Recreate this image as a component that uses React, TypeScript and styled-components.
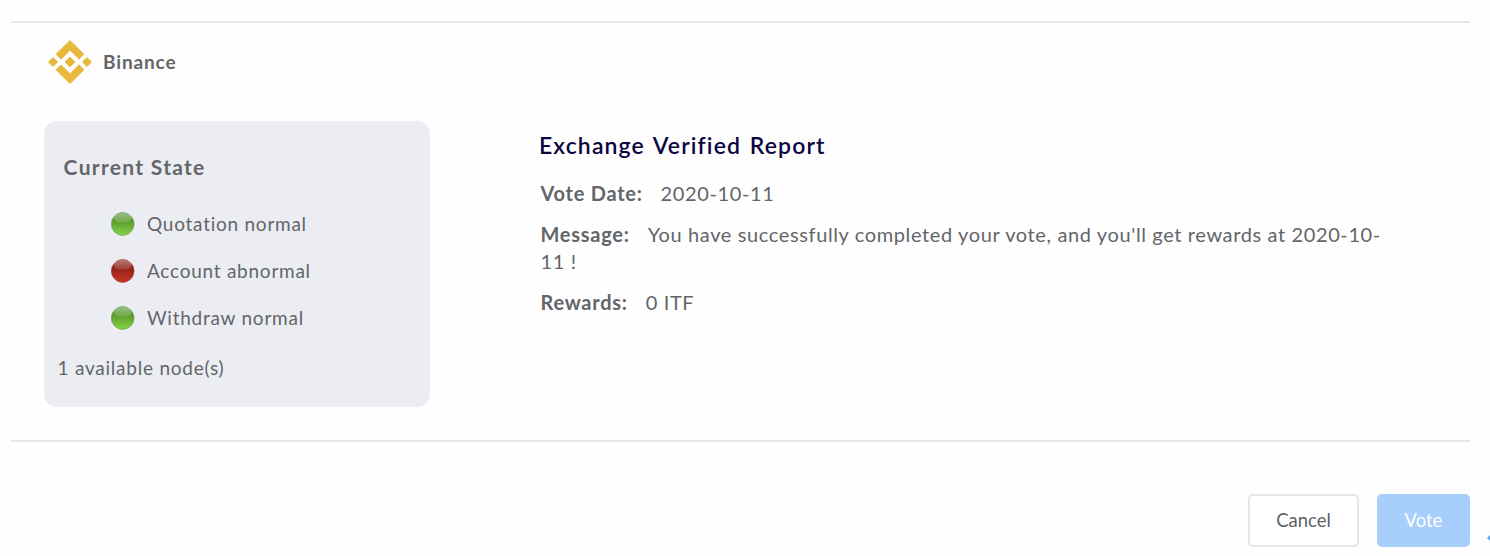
import React from "react";
import styled, { createGlobalStyle } from "styled-components";

const GlobalStyle = createGlobalStyle`
  *, *::before, *::after { box-sizing: border-box; }
  body { margin: 0; background: #fefefe; font-family: Lato, "Open Sans", sans-serif; color: #636569; }
  h2, h3, p, ul { margin: 0; padding: 0; font-weight: inherit; }
`;

const Page = styled.main`
  position: relative;
  height: 556px;
  padding: 21px 20px 0 11px;
  overflow: hidden;
`;

const Section = styled.section`
  height: 421px;
  padding: 16px 33px 0;
  border-top: 2px solid #e6e7ee;
  border-bottom: 2px solid #e6e7ee;
`;

const Brand = styled.header`
  display: flex;
  align-items: center;
  gap: 11px;
  height: 46px;
  padding-left: 4px;
`;

const BrandName = styled.span`
  font-size: 19px;
  line-height: 26px;
  font-weight: 700;
  letter-spacing: 0.86px;
`;

const Columns = styled.div`
  display: flex;
  align-items: flex-start;
  gap: 109px;
  margin-top: 36px;
`;

const StateCard = styled.div`
  width: 386px;
  height: 286px;
  padding: 31px 14px 0;
  border-radius: 13px;
  background: #ebedf3;
`;

const StateTitle = styled.h3`
  padding-left: 5.6px;
  font-size: 21px;
  line-height: 30px;
  font-weight: 700;
  letter-spacing: 1.3px;
`;

const StateList = styled.ul`
  margin-top: 18px;
  padding-left: 53px;
  list-style: none;
`;

const StateItem = styled.li`
  display: flex;
  align-items: center;
  gap: 12px;
  height: 47.2px;
  font-size: 19px;
  line-height: 24px;
  letter-spacing: 0.75px;
`;

const Nodes = styled.p`
  margin-top: 13px;
  margin-left: -0.5px;
  font-size: 19px;
  line-height: 26px;
  letter-spacing: 0.77px;
`;

const Report = styled.div`
  width: 850px;
  padding-top: 8px;
`;

const ReportTitle = styled.h2`
  font-size: 23px;
  line-height: 32px;
  font-weight: 600;
  letter-spacing: 1.12px;
  word-spacing: 1.8px;
  color: #0b0541;
`;

const Field = styled.p`
  margin: 0 0 13.4px 1.5px;
  font-size: 20px;
  line-height: 27.5px;
  letter-spacing: 0.62px;

  ${ReportTitle} + & { margin-top: 19px; }
`;

const Label = styled.strong`
  margin-right: 18px;
  font-weight: 700;
  letter-spacing: 0.74px;
`;

const Actions = styled.footer`
  display: flex;
  justify-content: flex-end;
  gap: 18px;
  margin-top: 52px;
`;

const Button = styled.button<{ $primary?: boolean }>`
  width: ${(p) => (p.$primary ? 93 : 111)}px;
  height: 53px;
  padding: 0 0 1px;
  border: 2px solid ${(p) => (p.$primary ? "#a8cefb" : "#e4e5ed")};
  border-radius: 5px;
  background: ${(p) => (p.$primary ? "#a8cefb" : "#fff")};
  color: ${(p) => (p.$primary ? "#fff" : "#606266")};
  font: 400 18.5px/26px Lato, sans-serif;
`;

const EdgeMark = styled.svg`
  position: absolute;
  right: 0;
  top: 535px;
`;

const BrandMark = () => (
  <svg width="44" height="44" viewBox="0 0 44 44" fill="#e8b83c" stroke="#e8b83c" strokeWidth=".8">
    <path d="M22 .5 36 14.2 31 19.2 22 10.2 13 19.2 8 14.2Z" />
    <path d="M22 43.5 36 29.8 31 24.8 22 33.8 13 24.8 8 29.8Z" />
    <path d="M.5 22 5 17.4 9.6 22 5 26.6Z" />
    <path d="M34.4 22 39 17.4 43.5 22 39 26.6Z" />
    <path d="M17 22 22 17 27 22 22 27Z" />
  </svg>
);

const Orb = ({ ok }: { ok: boolean }) => {
  const id = ok ? "ok" : "bad";
  return (
    <svg width="24" height="24" viewBox="0 0 24 24">
      <defs>
        <linearGradient id={id} x2="0" y2="1">
          <stop offset="0" stopColor={ok ? "#4f9132" : "#891d14"} />
          <stop offset=".42" stopColor={ok ? "#5f9f30" : "#962318"} />
          <stop offset="1" stopColor={ok ? "#83d545" : "#ca3524"} />
        </linearGradient>
        <linearGradient id={`${id}-shine`} x2="0" y2="1">
          <stop offset="0" stopColor="#fff" stopOpacity=".4" />
          <stop offset="1" stopColor="#fff" stopOpacity=".1" />
        </linearGradient>
      </defs>
      <circle cx="11.7" cy="12" r="11.4" fill={`url(#${id})`} stroke={ok ? "#65a044" : "#a04238"} strokeWidth=".6" />
      <ellipse cx="11.7" cy="6" rx="8.8" ry="4.9" fill={`url(#${id}-shine)`} />
    </svg>
  );
};

const states = [
  { text: "Quotation normal", ok: true },
  { text: "Account abnormal", ok: false },
  { text: "Withdraw normal", ok: true },
];

const fields = [
  { label: "Vote Date:", value: "2020-10-11" },
  { label: "Message:", value: "You have successfully completed your vote, and you'll get rewards at 2020-10-11 !" },
  { label: "Rewards:", value: "0 ITF" },
];

export default function App() {
  return (
    <Page>
      <GlobalStyle />
      <Section>
        <Brand>
          <BrandMark />
          <BrandName>Binance</BrandName>
        </Brand>
        <Columns>
          <StateCard>
            <StateTitle>Current State</StateTitle>
            <StateList>
              {states.map((s) => (
                <StateItem key={s.text}>
                  <Orb ok={s.ok} />
                  {s.text}
                </StateItem>
              ))}
            </StateList>
            <Nodes>1 available node(s)</Nodes>
          </StateCard>
          <Report>
            <ReportTitle>Exchange Verified Report</ReportTitle>
            {fields.map((f) => (
              <Field key={f.label}>
                <Label>{f.label}</Label>
                {f.value}
              </Field>
            ))}
          </Report>
        </Columns>
      </Section>
      <Actions>
        <Button>Cancel</Button>
        <Button $primary>Vote</Button>
      </Actions>
      <EdgeMark width="3" height="6" viewBox="0 0 3 6">
        <path d="M0 3 3 0V6Z" fill="#5ba7f6" />
      </EdgeMark>
    </Page>
  );
}
